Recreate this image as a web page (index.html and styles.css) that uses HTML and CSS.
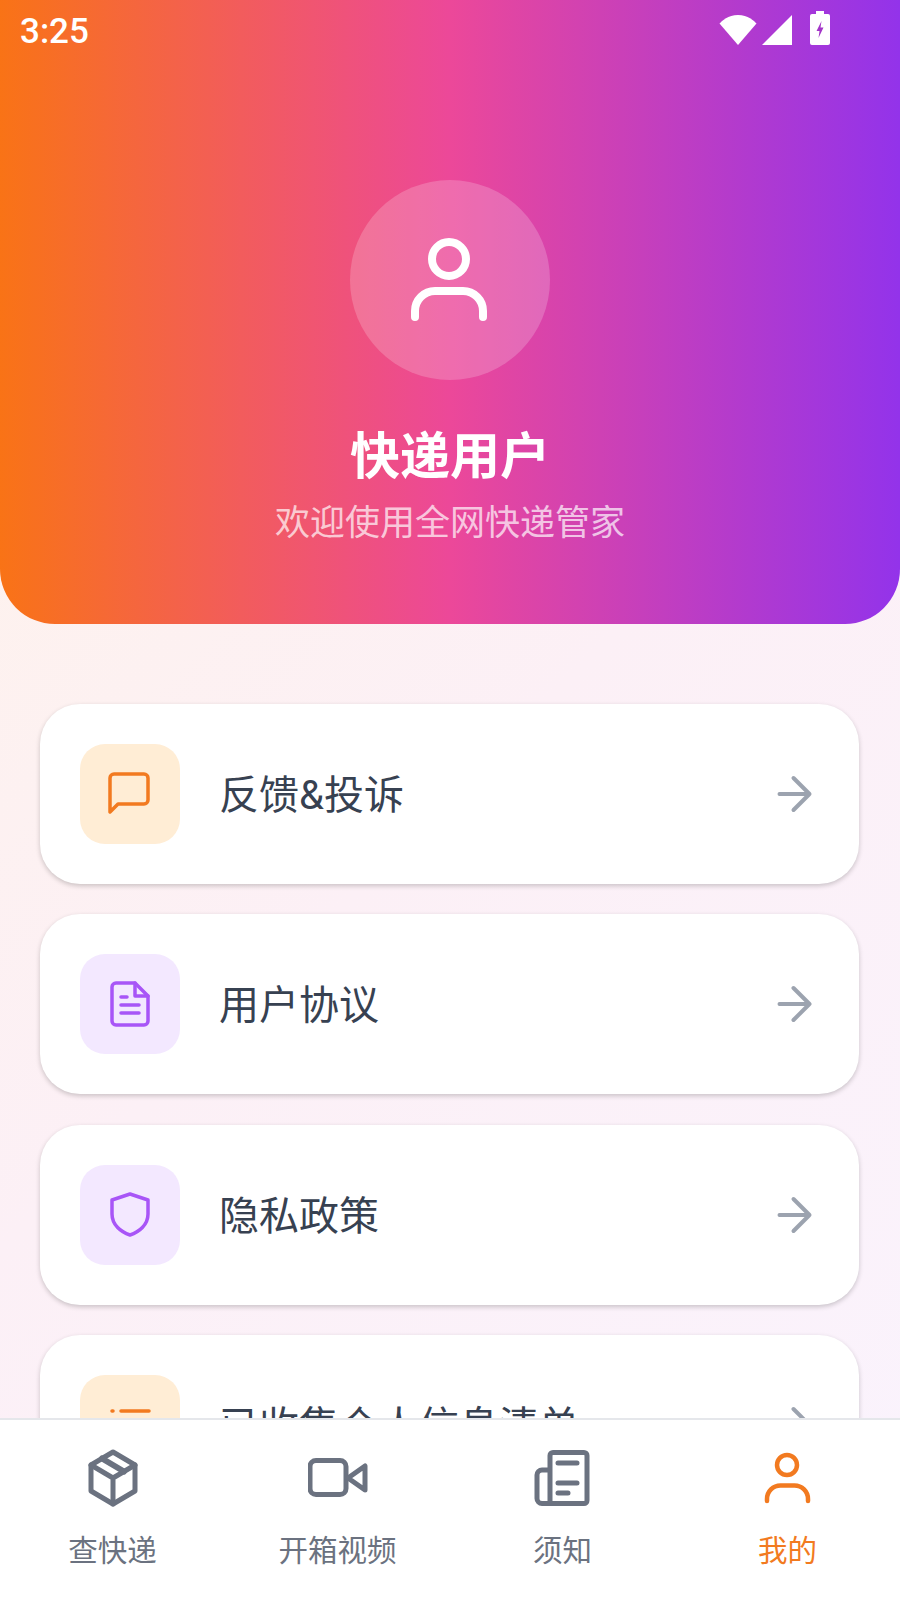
FILE: index.html
```html
<!DOCTYPE html>
<html lang="zh-CN">
<head>
    <meta charset="UTF-8">
    <meta name="viewport" content="width=device-width, initial-scale=1.0">
    <title>我的</title>
    <link rel="stylesheet" href="styles.css">
</head>
<body>
    <header class="profile-header">
        <div class="status-bar">
            <span class="status-time">3:25</span>
            <div class="status-icons">
                <svg class="icon-wifi" viewBox="0 0 38 31"><path d="M19 31 .500 9.500C3 7 9 1 19 1s16 6 18.500 8.500Z"/></svg>
                <svg class="icon-signal" viewBox="0 0 30 30"><path d="M30 0V30H0Z"/></svg>
                <svg class="icon-battery" viewBox="0 0 20 34"><path d="M6 0h8v3h4a2 2 0 0 1 2 2v27a2 2 0 0 1-2 2H2a2 2 0 0 1-2-2V5a2 2 0 0 1 2-2h4Z"/><path class="bolt" d="M11.500 10 6.500 20h3l-1 7 5-10.500h-3Z"/></svg>
            </div>
        </div>
        <div class="avatar">
            <svg viewBox="0 0 100 100"><circle cx="49" cy="29" r="17"/><path d="M15 87v-6a20 20 0 0 1 20-20h28a20 20 0 0 1 20 20v6"/></svg>
        </div>
        <h1 class="user-name">快递用户</h1>
        <p class="user-welcome">欢迎使用全网快递管家</p>
    </header>

    <main class="menu-list">
        <a class="menu-item" href="#">
            <span class="menu-icon orange">
                <svg viewBox="0 0 50 50"><path d="M5 43V9a4 4 0 0 1 4-4h30a4 4 0 0 1 4 4v22a4 4 0 0 1-4 4H13Z"/></svg>
            </span>
            <span class="menu-label">反馈&amp;投诉</span>
            <svg class="menu-arrow" viewBox="0 0 44 44"><path d="M5.500 22h30M19.500 6l16 16-16 16"/></svg>
        </a>
        <a class="menu-item" href="#">
            <span class="menu-icon purple">
                <svg viewBox="0 0 50 50"><path d="M11 4h19l13 13v25a4 4 0 0 1-4 4H11a4 4 0 0 1-4-4V8a4 4 0 0 1 4-4Z"/><path d="M30 4v13h13"/><path d="M16 18h6M16 26h18M16 34h18"/></svg>
            </span>
            <span class="menu-label">用户协议</span>
            <svg class="menu-arrow" viewBox="0 0 44 44"><path d="M5.500 22h30M19.500 6l16 16-16 16"/></svg>
        </a>
        <a class="menu-item" href="#">
            <span class="menu-icon purple">
                <svg viewBox="0 0 50 50"><path d="M25 4 43 10v14c0 11-9 18-18 21C16 42 7 35 7 24V10Z"/></svg>
            </span>
            <span class="menu-label">隐私政策</span>
            <svg class="menu-arrow" viewBox="0 0 44 44"><path d="M5.500 22h30M19.500 6l16 16-16 16"/></svg>
        </a>
        <a class="menu-item" href="#">
            <span class="menu-icon orange">
                <svg viewBox="0 0 50 50"><path d="M16 11h28M7 11h1M16 25h28M7 25h1M16 39h28M7 39h1"/></svg>
            </span>
            <span class="menu-label">已收集个人信息清单</span>
            <svg class="menu-arrow" viewBox="0 0 44 44"><path d="M5.500 22h30M19.500 6l16 16-16 16"/></svg>
        </a>
    </main>

    <nav class="tab-bar">
        <a class="tab" href="#">
            <svg viewBox="0 0 60 60"><path d="M30 4 52 17V43L30 56 8 43V17Z"/><path d="M8 17 30 30 52 17M30 30V56"/><path class="tape" d="M19 10.500 41 23.500"/></svg>
            <span>查快递</span>
        </a>
        <a class="tab" href="#">
            <svg viewBox="0 0 60 60"><rect x="2" y="12.500" width="36" height="34" rx="6"/><path d="M40 30 57 18V42Z"/></svg>
            <span>开箱视频</span>
        </a>
        <a class="tab" href="#">
            <svg viewBox="0 0 60 60"><path d="M15 22H9a5 5 0 0 0-5 5v23.500a5 5 0 0 0 5 5h42a3 3 0 0 0 3-3v-45a3 3 0 0 0-3-3H20a3 3 0 0 0-3 3v48"/><path d="M25 15h19M25 35h19M25 45h10"/></svg>
            <span>须知</span>
        </a>
        <a class="tab active" href="#">
            <svg viewBox="0 0 60 60"><circle cx="29" cy="17" r="10"/><path d="M9 53v-2a13.500 13.500 0 0 1 13.500-13.500h14a13.500 13.500 0 0 1 13.500 13.500v2"/></svg>
            <span>我的</span>
        </a>
    </nav>
</body>
</html>
```

FILE: styles.css
```css
* {
    margin: 0;
    padding: 0;
    box-sizing: border-box;
    font-family: "Noto Sans CJK SC", "Noto Sans", sans-serif;
}

body {
    height: 100vh;
    overflow: hidden;
    display: flex;
    flex-direction: column;
    background: linear-gradient(135deg, #fff3e8, #fcf0f6, #faf3fd);
    color: #374151;
}

a {
    text-decoration: none;
    color: inherit;
}

svg {
    fill: none;
    stroke: currentColor;
    stroke-linecap: round;
    stroke-linejoin: round;
}

.profile-header {
    flex: none;
    height: 624px;
    display: flex;
    flex-direction: column;
    align-items: center;
    color: #fff;
    background: linear-gradient(90deg, #f97316, #ec4899, #9333ea);
    border-radius: 0 0 55px 55px;
}

.status-bar {
    width: 100%;
    height: 60px;
    padding: 0 70px 0 20px;
    display: flex;
    justify-content: space-between;
    align-items: center;
}

.status-time {
    padding-top: 4px;
    font-family: Roboto, sans-serif;
    font-size: 35px;
    font-weight: 500;
    line-height: 56px;
}

.status-icons {
    display: flex;
    align-items: flex-end;
    height: 34px;
    margin-bottom: 4px;
}

.status-icons svg {
    fill: #fff;
    stroke: none;
}

.status-icons .bolt {
    fill: #a335c8;
}

.icon-wifi {
    width: 38px;
    height: 31px;
    margin-right: 5px;
}

.icon-signal {
    width: 30px;
    height: 30px;
    margin-right: 18px;
}

.icon-battery {
    width: 20px;
    height: 34px;
}

.avatar {
    width: 200px;
    height: 200px;
    margin-top: 120px;
    display: flex;
    justify-content: center;
    align-items: center;
    border-radius: 50%;
    background: rgba(255, 255, 255, 0.2);
}

.avatar svg {
    width: 100px;
    height: 100px;
    stroke-width: 8;
}

.user-name {
    margin-top: 40px;
    font-size: 50px;
    font-weight: 700;
    line-height: 64px;
}

.user-welcome {
    margin-top: 13px;
    font-size: 35px;
    line-height: 46px;
    color: rgba(255, 255, 255, 0.7);
}

.menu-list {
    flex: 1;
    min-height: 0;
    overflow: hidden;
    padding: 80px 41px 0 40px;
    display: flex;
    flex-direction: column;
    gap: 30.3px;
}

.menu-item {
    flex: none;
    height: 180px;
    padding: 0 41px 0 40px;
    display: flex;
    align-items: center;
    background: #fff;
    border-radius: 40px;
    box-shadow: 0 2px 5px rgba(0, 0, 0, 0.2);
}

.menu-icon {
    flex: none;
    width: 100px;
    height: 100px;
    display: flex;
    justify-content: center;
    align-items: center;
    border-radius: 25px;
}

.menu-icon svg {
    width: 50px;
    height: 50px;
    stroke-width: 3.5;
}

.menu-icon.orange {
    background: #ffedd5;
    color: #f27a20;
}

.menu-icon.purple {
    background: #f3e8ff;
    color: #a855f7;
}

.menu-label {
    flex: 1;
    margin: 4px 0 0 39px;
    font-family: Roboto, "Noto Sans CJK SC", sans-serif;
    font-size: 40px;
    line-height: 56px;
}

.menu-arrow {
    flex: none;
    width: 44px;
    height: 44px;
    color: #9ca3af;
    stroke-width: 4;
}

.tab-bar {
    flex: none;
    height: 182px;
    padding-top: 28px;
    display: grid;
    grid-template-columns: repeat(4, 1fr);
    align-items: start;
    background: #fff;
    border-top: 2px solid #e5e7eb;
}

.tab {
    display: flex;
    flex-direction: column;
    align-items: center;
    color: #6b7280;
}

.tab svg {
    width: 60px;
    height: 60px;
    stroke-width: 5;
}

.tab .tape {
    stroke-width: 6;
}

.tab span {
    margin-top: 19px;
    font-size: 29.500px;
    line-height: 42px;
}

.tab.active {
    color: #f27a20;
}

.tab.active svg {
    stroke-width: 4.500;
}
```
